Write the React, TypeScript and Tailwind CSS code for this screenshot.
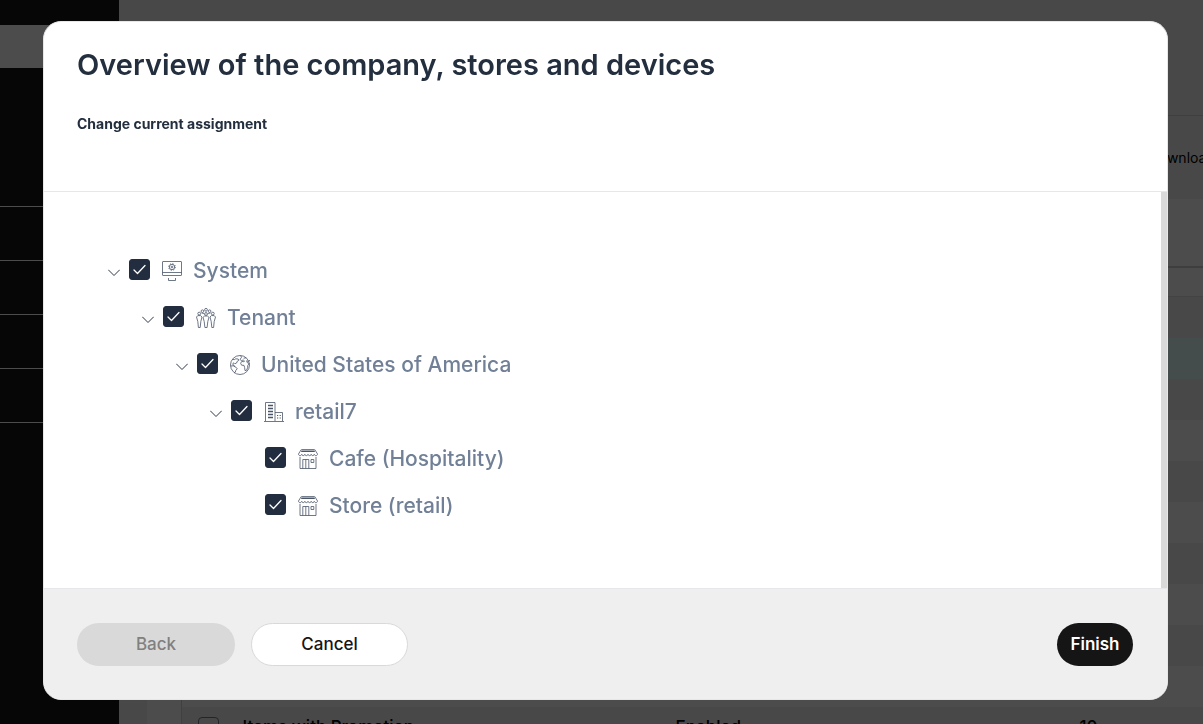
import { useState } from "react";
import type { ReactNode } from "react";

type TreeNode = {
  id: string;
  label: string;
  icon: "system" | "tenant" | "country" | "company" | "store";
  children?: TreeNode[];
};

const tree: TreeNode = {
  id: "system",
  label: "System",
  icon: "system",
  children: [
    {
      id: "tenant",
      label: "Tenant",
      icon: "tenant",
      children: [
        {
          id: "usa",
          label: "United States of America",
          icon: "country",
          children: [
            {
              id: "retail7",
              label: "retail7",
              icon: "company",
              children: [
                { id: "cafe", label: "Cafe (Hospitality)", icon: "store" },
                { id: "store", label: "Store (retail)", icon: "store" },
              ],
            },
          ],
        },
      ],
    },
  ],
};

const icons: Record<TreeNode["icon"], ReactNode> = {
  system: (
    <>
      <rect x="0.5" y="0.5" width="19" height="14" rx="0.5" />
      <path d="M0.5 11.5h19M6.5 17v2.5h7V17" />
      <circle cx="10" cy="6" r="2.7" />
      <circle cx="10" cy="6" r="3.4" strokeDasharray="1.2 1.47" />
      <circle cx="10" cy="6" r="0.9" />
    </>
  ),
  tenant: (
    <>
      <circle cx="10" cy="1.8" r="1.4" />
      <circle cx="6.4" cy="3.2" r="1.3" />
      <circle cx="13.6" cy="3.2" r="1.3" />
      <circle cx="3.2" cy="5.6" r="1.4" />
      <circle cx="10" cy="6" r="1.4" />
      <circle cx="16.8" cy="5.6" r="1.4" />
      <path d="M1.8 7.6h2.8l1.4 1.4-1.2 4.5-.6 6H2.4l-.6-6L.5 9z" />
      <path d="M8.6 8h2.8l1.6 1.4-1.2 4.1-.7 6H8.9l-.7-6L7 9.4z" />
      <path d="M15.4 7.6h2.8L19.5 9l-1.3 4.5-.6 6h-1.8l-.6-6L14 9z" />
      <path d="M5.6 5.2h1.6l1 1M12 6.2l.8-1h1.6" />
    </>
  ),
  country: (
    <>
      <circle cx="10" cy="10" r="9.5" />
      <path d="M2.6 4.4l1.8.2 1.4-.8 2.4.2.6 1.4-1.6 1-.6 1.6-1.6.8-1-1-1.2.8.4 1.6 1.6.8M.6 11l2.6-.2 3 1.6 1 1.4-1.4 1.6-.4 1.6-1.4 1.2M10.8.6l.6 2-1.4 1.8 1.4 1.2 1.8-.6 1.4 1-.8.8-2-.4-1.2 1.8 1 2 2.4.2.6 2 .4 3.2 1.4-.2 1.2-2.6.2-2.4 1.4-2-1.8-.6-.8-2 2.2.6 1-1.4M13.6 3.2l2.6-.4" />
    </>
  ),
  company: (
    <>
      <path d="M1.5 19V.5h9.5V19M11 10.5h7.5V19M0 19.5h20" />
      <path d="M4 3.5h5M4 6.5h5M4 9.5h5M4 12.5h5M4 15.5h5" strokeWidth="1.3" />
      <path d="M13 13.5h1.2M15.6 13.5h1.2M13 16h1.2M15.6 16h1.2" strokeWidth="1.1" />
    </>
  ),
  store: (
    <>
      <path d="M3.4.8h13.2M3.2 2.4h13.6" strokeWidth="1.1" />
      <path d="M3.2.6L.5 5M16.8.6L19.5 5" />
      <path d="M.5 5c.1 2.2 2.8 2.2 3.2.3.4 1.8 2.7 1.8 3.1 0 .4 1.8 2.8 1.8 3.2 0 .4 1.8 2.8 1.8 3.2 0 .4 1.8 2.7 1.8 3.1 0 .4 1.9 3.1 1.9 3.2-.3" />
      <path d="M2 8v11.5h16V8M4.8 19.5V10.5h6v9M7.8 10.5v9M13 10.5h2.8v3H13z" />
    </>
  ),
};

function NodeIcon({ name }: { name: TreeNode["icon"] }) {
  return (
    <svg
      viewBox="0 0 20 20"
      className="mt-px ml-3 size-5 shrink-0"
      fill="none"
      stroke="#4a5568"
      strokeWidth="0.8"
      strokeLinejoin="round"
      aria-hidden="true"
    >
      {icons[name]}
    </svg>
  );
}

function TreeItem({ node }: { node: TreeNode }) {
  const [open, setOpen] = useState(true);

  return (
    <li>
      <div className="flex h-[47px] items-center">
        {node.children ? (
          <button
            type="button"
            aria-label={`Toggle ${node.label}`}
            aria-expanded={open}
            onClick={() => setOpen(!open)}
            className="w-[21px] shrink-0 pt-1"
          >
            <svg viewBox="0 0 12 8" className="h-2 w-3" fill="none" stroke="#2d3748" strokeLinecap="round" aria-hidden="true">
              <path d="M0.5 1L6 6.5 11.5 1" />
            </svg>
          </button>
        ) : (
          <span className="w-[21px] shrink-0" />
        )}
        <span className="grid shrink-0 pb-0.5">
          <input
            id={node.id}
            type="checkbox"
            defaultChecked
            className="peer col-start-1 row-start-1 size-[21px] appearance-none rounded-[3px] border border-[#222d3f] checked:bg-[#222d3f]"
          />
          <svg
            viewBox="0 0 21 21"
            className="pointer-events-none invisible col-start-1 row-start-1 size-[21px] peer-checked:visible"
            fill="none"
            stroke="#fff"
            strokeWidth="1.3"
            strokeLinecap="round"
            strokeLinejoin="round"
            aria-hidden="true"
          >
            <path d="M5 11l3.5 3.5L16 6.5" />
          </svg>
        </span>
        <label htmlFor={node.id} className="flex items-center text-[21px] font-medium text-[#718096]">
          <NodeIcon name={node.icon} />
          <span className="ml-[11px]">{node.label}</span>
        </label>
      </div>
      {node.children && open && (
        <ul className="pl-[34px]">
          {node.children.map(child => (
            <TreeItem key={child.id} node={child} />
          ))}
        </ul>
      )}
    </li>
  );
}

const rowColors = [
  "bg-[#f0f0f0]",
  "bg-[#e8ffff]",
  "bg-[#f0f0f0]",
  "bg-white",
  "bg-[#f0f0f0]",
  "bg-white",
  "bg-[#f0f0f0]",
  "bg-white",
  "bg-[#f0f0f0]",
  "bg-white",
];

function Backdrop() {
  return (
    <div className="flex h-full overflow-hidden">
      <nav className="w-[119px] shrink-0 bg-[#171717]">
        <div className="mt-[25px] h-[43px] bg-white" />
        <div className="h-[85px]" />
        {[0, 1, 2, 3, 4].map(i => (
          <div key={i} className="h-[54px] border-b border-white" />
        ))}
      </nav>
      <main className="min-w-0 flex-1 bg-[#f0f0f0]">
        <div className="h-[116px] border-b border-[#d4d4d4]" />
        <div className="flex h-[83px] items-center justify-end overflow-hidden text-sm">
          <a href="#download" className="-mr-3">Download</a>
        </div>
        <div className="ml-7 bg-white pl-[34px]">
          <div className="h-[69px] border-b-2 border-[#cfcfcf]" />
          <div className="h-[29px] border-b border-[#e0e0e0]" />
          <table className="w-full table-fixed border-l border-[#d8d8d8]">
            <colgroup>
              <col className="w-[61px]" />
              <col className="w-[433px]" />
              <col className="w-[404px]" />
              <col />
            </colgroup>
            <tbody>
              {rowColors.map((color, i) => (
                <tr key={i} className={color}>
                  <td colSpan={4} className="h-[41px]" />
                </tr>
              ))}
              <tr className="bg-[#f0f0f0] text-[17px] font-medium">
                <td className="h-[41px] pl-4">
                  <input
                    type="checkbox"
                    aria-label="Items with Promotion"
                    className="block size-[21px] appearance-none rounded border border-[#718096]"
                  />
                </td>
                <td>Items with Promotion</td>
                <td>Enabled</td>
                <td>10</td>
              </tr>
            </tbody>
          </table>
        </div>
      </main>
    </div>
  );
}

export default function App() {
  return (
    <div className="h-screen overflow-hidden font-['Inter',sans-serif]">
      <Backdrop />
      <div className="fixed inset-0 flex bg-black/70 pt-[21px] pr-[35px] pb-6 pl-[43px]">
        <div
          role="dialog"
          aria-modal="true"
          aria-labelledby="dialog-title"
          className="flex flex-1 flex-col overflow-hidden rounded-[18px] border border-gray-200 bg-white"
        >
          <header className="h-[170px] shrink-0 border-b border-gray-200 px-[33px] pt-[23px] text-[#232f3e]">
            <h1 id="dialog-title" className="text-[29px] leading-10 font-semibold">
              Overview of the company, stores and devices
            </h1>
            <p className="mt-[29px] text-sm font-bold">Change current assignment</p>
          </header>

          <div className="flex min-h-0 flex-1">
            <ul className="flex-1 overflow-hidden pt-[55px] pl-16">
              <TreeItem node={tree} />
            </ul>
            <div className="w-1.5 bg-[#d9d9d9]" />
          </div>

          <footer className="flex shrink-0 items-center gap-4 border-t border-gray-200 bg-[#efefef] pt-[34px] pr-[34px] pb-[33px] pl-[33px] text-[17px]">
            <button type="button" disabled className="h-[43px] w-[158px] rounded-full bg-[#d9d9d9] font-medium text-[#808080]">
              Back
            </button>
            <button
              type="button"
              className="h-[43px] w-[157px] rounded-full border border-[#d9d9d9] bg-white font-medium text-[#151515]"
            >
              Cancel
            </button>
            <button type="button" className="ml-auto h-[43px] w-[76px] rounded-full bg-[#151515] font-semibold text-white">
              Finish
            </button>
          </footer>
        </div>
      </div>
    </div>
  );
}
